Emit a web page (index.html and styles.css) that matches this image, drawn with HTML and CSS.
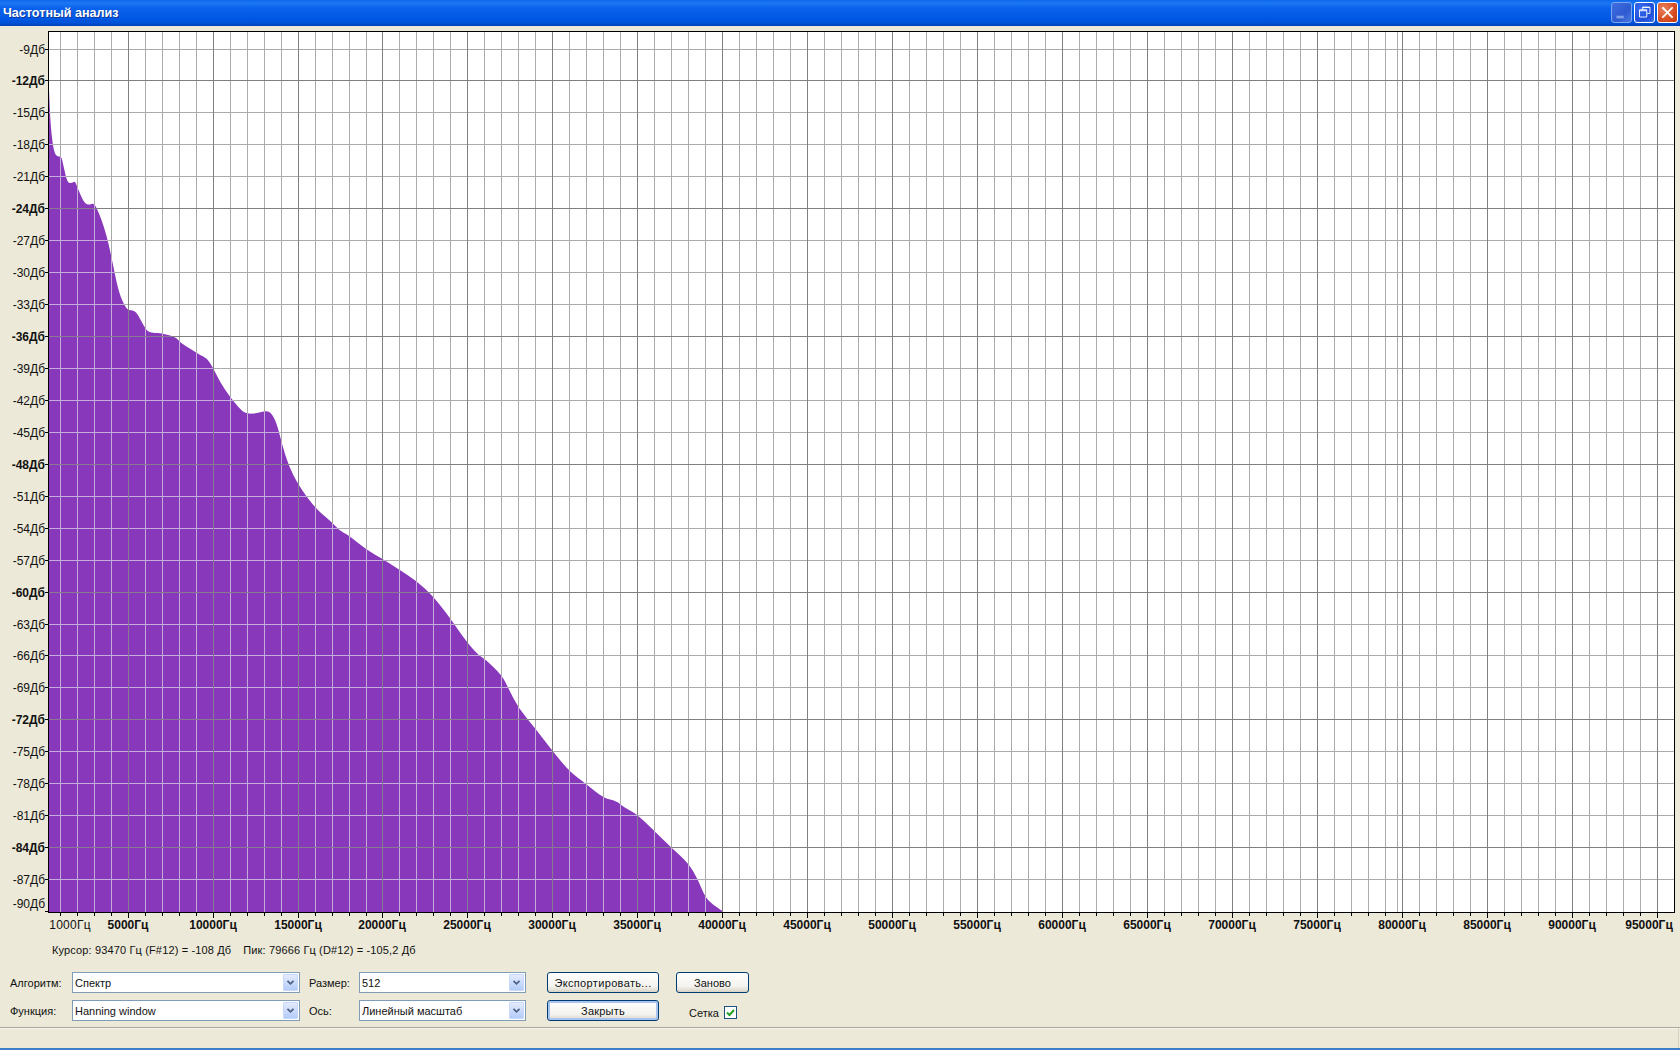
FILE: index.html
```html
<!DOCTYPE html>
<html lang="ru">
<head>
<meta charset="utf-8">
<title>Частотный анализ</title>
<link rel="stylesheet" href="styles.css">
</head>
<body>
<div class="window">
  <header class="titlebar">
    <div class="title">Частотный анализ</div>
    <div class="winbtns">
      <div class="winbtn min"><svg class="glyph" viewBox="0 0 21 21"><rect x="5" y="14" width="8" height="3" class="min-bar"/></svg></div>
      <div class="winbtn restore"><svg class="glyph" viewBox="0 0 21 21"><path class="white-line" d="M8.5 7.5V4.5H16.5V11.5H13.5M5 7.5H13V15.5H5Z"/><path class="white-line" d="M8 5h8M5 8.5h8"/></svg></div>
      <div class="winbtn close"><svg class="glyph" viewBox="0 0 21 21"><path class="white-x" d="M5.5 5.5L15.5 15.5M15.5 5.5L5.5 15.5"/></svg></div>
    </div>
  </header>

  <svg class="chart" viewBox="0 26 1680 909" width="1680" height="909">
    <defs>
      <path id="spectrum" d="M49 90 Q50 113 50.6 123 Q51.3 133 52.6 142.5 Q54 152 55.6 154.5 Q57.3 157 59.3 156.5 Q61.3 156 62.3 160.5 Q63.3 165 65.3 174 Q67.3 183 69.8 183 Q72.3 183 73.6 182 Q75 181 76.1 184 Q77.3 187 80.6 195 Q84 203 86.5 204 Q89 205 91.5 204 Q94 203 96.5 208 Q99 213 101.5 220 Q104 227 106.5 236 Q109 245 111.5 257.5 Q114 270 116.5 281.5 Q119 293 122.3 300.5 Q125.7 308 127.3 309 Q129 310 132.3 310.5 Q135.7 311 138.2 315.5 Q140.7 320 144 326 Q147.3 332 151.5 332.5 Q155.7 333 158.2 333 Q160.7 333 168.2 335 Q175.7 337 178.2 340 Q180.7 343 185.7 346 Q190.7 349 195.3 352 Q200 355 203.3 356.5 Q206.7 358 209.7 362.5 Q212.7 367 216.3 374.5 Q220 382 225 389.5 Q230 397 235.8 404 Q241.7 411 244.8 412.5 Q248 414 253 413.5 Q258 413 261.5 412 Q265 411 267.8 411.5 Q270.7 412 273.7 417.5 Q276.7 423 279.2 433 Q281.7 443 285 454 Q288.3 465 293.3 475 Q298.3 485 306.6 496.5 Q315 508 323.3 515 Q331.7 522 335.8 526.5 Q340 531 344.1 533 Q348.3 535 357.5 542.5 Q366.7 550 374.7 554.5 Q382.7 559 389.7 563.5 Q396.7 568 406.7 574.5 Q416.7 581 424.2 588 Q431.7 595 435.8 600 Q440 605 445 611.5 Q450 618 458.3 630 Q466.7 642 472.5 648.5 Q478.3 655 481.6 657 Q485 659 493.3 667 Q501.7 675 505 681.5 Q508.3 688 513.3 698 Q518.3 708 526.6 718 Q535 728 544.1 740 Q553.3 752 561.6 762 Q570 772 577.5 777.5 Q585 783 594.1 790.5 Q603.3 798 610 799.5 Q616.7 801 620 804 Q623.3 807 630 810.5 Q636.7 814 645 822 Q653.3 830 662.5 839 Q671.7 848 680 855.5 Q688.3 863 693.3 871.5 Q698.3 880 701.6 888.5 Q705 897 709.1 901 Q713.3 905 718 908 Q722.7 911 723 912 L49 912 Z"/>
      <clipPath id="fill-shape"><use href="#spectrum"/></clipPath>
      <path id="v-minor" d="M60.5 32V912M77.5 32V912M94.5 32V912M111.5 32V912M145.5 32V912M162.5 32V912M179.5 32V912M196.5 32V912M230.5 32V912M247.5 32V912M264.5 32V912M281.5 32V912M315.5 32V912M332.5 32V912M349.5 32V912M366.5 32V912M399.5 32V912M416.5 32V912M433.5 32V912M450.5 32V912M484.5 32V912M501.5 32V912M518.5 32V912M535.5 32V912M569.5 32V912M586.5 32V912M603.5 32V912M620.5 32V912M654.5 32V912M671.5 32V912M688.5 32V912M705.5 32V912M739.5 32V912M756.5 32V912M773.5 32V912M790.5 32V912M824.5 32V912M841.5 32V912M858.5 32V912M875.5 32V912M909.5 32V912M926.5 32V912M943.5 32V912M960.5 32V912M994.5 32V912M1011.5 32V912M1028.5 32V912M1045.5 32V912M1079.5 32V912M1096.5 32V912M1113.5 32V912M1130.5 32V912M1164.5 32V912M1181.5 32V912M1198.5 32V912M1215.5 32V912M1249.5 32V912M1266.5 32V912M1283.5 32V912M1300.5 32V912M1334.5 32V912M1351.5 32V912M1368.5 32V912M1385.5 32V912M1397.5 32V912M1419.5 32V912M1436.5 32V912M1453.5 32V912M1470.5 32V912M1504.5 32V912M1521.5 32V912M1538.5 32V912M1555.5 32V912M1589.5 32V912M1606.5 32V912M1623.5 32V912M1640.5 32V912"/>
      <path id="v-major" d="M128.5 32V912M213.5 32V912M298.5 32V912M382.5 32V912M467.5 32V912M552.5 32V912M637.5 32V912M722.5 32V912M807.5 32V912M892.5 32V912M977.5 32V912M1062.5 32V912M1147.5 32V912M1232.5 32V912M1317.5 32V912M1402.5 32V912M1487.5 32V912M1572.5 32V912M1657.5 32V912"/>
      <path id="h-minor" d="M49 49.5H1674M49 112.5H1674M49 144.5H1674M49 176.5H1674M49 240.5H1674M49 272.5H1674M49 304.5H1674M49 368.5H1674M49 400.5H1674M49 432.5H1674M49 496.5H1674M49 528.5H1674M49 560.5H1674M49 624.5H1674M49 655.5H1674M49 687.5H1674M49 751.5H1674M49 783.5H1674M49 815.5H1674M49 879.5H1674"/>
      <path id="h-major" d="M49 80.5H1674M49 208.5H1674M49 336.5H1674M49 464.5H1674M49 592.5H1674M49 719.5H1674M49 847.5H1674"/>
    </defs>

    <rect class="plot-bg" x="48" y="31" width="1626" height="881"/>
    <use href="#spectrum" class="spectrum"/>
    <use href="#v-minor" class="grid-minor"/>
    <use href="#h-minor" class="grid-minor"/>
    <use href="#v-major" class="grid-major"/>
    <use href="#h-major" class="grid-major"/>
    <g clip-path="url(#fill-shape)">
      <use href="#v-minor" class="grid-minor-in"/>
      <use href="#h-minor" class="grid-minor-in"/>
      <use href="#v-major" class="grid-major-in"/>
      <use href="#h-major" class="grid-major-in"/>
    </g>
    <rect class="plot-frame" x="48.5" y="31.5" width="1626" height="881"/>
    <path class="ticks" d="M45 49.5h3M45 80.5h3M45 112.5h3M45 144.5h3M45 176.5h3M45 208.5h3M45 240.5h3M45 272.5h3M45 304.5h3M45 336.5h3M45 368.5h3M45 400.5h3M45 432.5h3M45 464.5h3M45 496.5h3M45 528.5h3M45 560.5h3M45 592.5h3M45 624.5h3M45 655.5h3M45 687.5h3M45 719.5h3M45 751.5h3M45 783.5h3M45 815.5h3M45 847.5h3M45 879.5h3M45 911.5h3"/>
    <path class="ticks" d="M60.5 913v3M77.5 913v3M94.5 913v3M111.5 913v3M145.5 913v3M162.5 913v3M179.5 913v3M196.5 913v3M230.5 913v3M247.5 913v3M264.5 913v3M281.5 913v3M315.5 913v3M332.5 913v3M349.5 913v3M366.5 913v3M399.5 913v3M416.5 913v3M433.5 913v3M450.5 913v3M484.5 913v3M501.5 913v3M518.5 913v3M535.5 913v3M569.5 913v3M586.5 913v3M603.5 913v3M620.5 913v3M654.5 913v3M671.5 913v3M688.5 913v3M705.5 913v3M739.5 913v3M756.5 913v3M773.5 913v3M790.5 913v3M824.5 913v3M841.5 913v3M858.5 913v3M875.5 913v3M909.5 913v3M926.5 913v3M943.5 913v3M960.5 913v3M994.5 913v3M1011.5 913v3M1028.5 913v3M1045.5 913v3M1079.5 913v3M1096.5 913v3M1113.5 913v3M1130.5 913v3M1164.5 913v3M1181.5 913v3M1198.5 913v3M1215.5 913v3M1249.5 913v3M1266.5 913v3M1283.5 913v3M1300.5 913v3M1334.5 913v3M1351.5 913v3M1368.5 913v3M1385.5 913v3M1419.5 913v3M1436.5 913v3M1453.5 913v3M1470.5 913v3M1504.5 913v3M1521.5 913v3M1538.5 913v3M1555.5 913v3M1589.5 913v3M1606.5 913v3M1623.5 913v3M1640.5 913v3"/>
    <path class="ticks" d="M128.5 913v5M213.5 913v5M298.5 913v5M382.5 913v5M467.5 913v5M552.5 913v5M637.5 913v5M722.5 913v5M807.5 913v5M892.5 913v5M977.5 913v5M1062.5 913v5M1147.5 913v5M1232.5 913v5M1317.5 913v5M1402.5 913v5M1487.5 913v5M1572.5 913v5M1657.5 913v5"/>

    <g class="ylabels">
      <text x="45" y="54">-9Дб</text>
      <text x="45" y="85" class="b">-12Дб</text>
      <text x="45" y="117">-15Дб</text>
      <text x="45" y="149">-18Дб</text>
      <text x="45" y="181">-21Дб</text>
      <text x="45" y="213" class="b">-24Дб</text>
      <text x="45" y="245">-27Дб</text>
      <text x="45" y="277">-30Дб</text>
      <text x="45" y="309">-33Дб</text>
      <text x="45" y="341" class="b">-36Дб</text>
      <text x="45" y="373">-39Дб</text>
      <text x="45" y="405">-42Дб</text>
      <text x="45" y="437">-45Дб</text>
      <text x="45" y="469" class="b">-48Дб</text>
      <text x="45" y="501">-51Дб</text>
      <text x="45" y="533">-54Дб</text>
      <text x="45" y="565">-57Дб</text>
      <text x="45" y="597" class="b">-60Дб</text>
      <text x="45" y="629">-63Дб</text>
      <text x="45" y="660">-66Дб</text>
      <text x="45" y="692">-69Дб</text>
      <text x="45" y="724" class="b">-72Дб</text>
      <text x="45" y="756">-75Дб</text>
      <text x="45" y="788">-78Дб</text>
      <text x="45" y="820">-81Дб</text>
      <text x="45" y="852" class="b">-84Дб</text>
      <text x="45" y="884">-87Дб</text>
      <text x="45" y="908">-90Дб</text>
    </g>
    <g class="xlabels">
      <text x="70" y="929" class="r">1000Гц</text>
      <text x="128" y="929" class="b">5000Гц</text>
      <text x="213" y="929" class="b">10000Гц</text>
      <text x="298" y="929" class="b">15000Гц</text>
      <text x="382" y="929" class="b">20000Гц</text>
      <text x="467" y="929" class="b">25000Гц</text>
      <text x="552" y="929" class="b">30000Гц</text>
      <text x="637" y="929" class="b">35000Гц</text>
      <text x="722" y="929" class="b">40000Гц</text>
      <text x="807" y="929" class="b">45000Гц</text>
      <text x="892" y="929" class="b">50000Гц</text>
      <text x="977" y="929" class="b">55000Гц</text>
      <text x="1062" y="929" class="b">60000Гц</text>
      <text x="1147" y="929" class="b">65000Гц</text>
      <text x="1232" y="929" class="b">70000Гц</text>
      <text x="1317" y="929" class="b">75000Гц</text>
      <text x="1402" y="929" class="b">80000Гц</text>
      <text x="1487" y="929" class="b">85000Гц</text>
      <text x="1572" y="929" class="b">90000Гц</text>
      <text x="1649" y="929" class="b">95000Гц</text>
    </g>
  </svg>

  <div class="readout">
    <span>Курсор: 93470 Гц (F#12) = -108 Дб</span>
    <span>Пик: 79666 Гц (D#12) = -105,2 Дб</span>
  </div>

  <div class="controls">
    <label class="lbl">Алгоритм:</label>
    <div class="combo"><span>Спектр</span><i class="combo-arrow"><svg viewBox="0 0 15 17"><path d="M4 6.5L7.5 10L11 6.5" class="chev"/></svg></i></div>
    <label class="lbl lbl-2">Размер:</label>
    <div class="combo"><span>512</span><i class="combo-arrow"><svg viewBox="0 0 15 17"><path d="M4 6.5L7.5 10L11 6.5" class="chev"/></svg></i></div>
    <button class="btn btn-export btn-spaced">Экспортировать...</button>
    <button class="btn btn-again">Заново</button>

    <label class="lbl">Функция:</label>
    <div class="combo"><span>Hanning window</span><i class="combo-arrow"><svg viewBox="0 0 15 17"><path d="M4 6.5L7.5 10L11 6.5" class="chev"/></svg></i></div>
    <label class="lbl lbl-2">Ось:</label>
    <div class="combo"><span>Линейный масштаб</span><i class="combo-arrow"><svg viewBox="0 0 15 17"><path d="M4 6.5L7.5 10L11 6.5" class="chev"/></svg></i></div>
    <button class="btn btn-default btn-export">Закрыть</button>
    <div class="gridtoggle">
      <span>Сетка</span>
      <span class="check"><svg viewBox="0 0 11 11"><path d="M2 5.5L4.5 8L9 3" class="tick"/></svg></span>
    </div>
  </div>

  <div class="statusbar"><div class="status-cell"></div></div>
  <div class="taskstrip"></div>
</div>
</body>
</html>
```
FILE: styles.css
```css
* { box-sizing: border-box; }
html, body { margin: 0; padding: 0; height: 100%; overflow: hidden; }
body { background: #ece9d8; font-family: "Liberation Sans", Arial, sans-serif; font-size: 11px; color: #111; }

.window { display: flex; flex-direction: column; width: 1680px; height: 1050px; }

.titlebar {
  flex: 0 0 26px; display: flex; align-items: center; justify-content: space-between;
  padding: 0 2px 0 3px;
  background: linear-gradient(to bottom, #0f66ea 0, #1b78f4 12%, #0b62ea 32%, #0058e4 70%, #0052d8 88%, #0040b4 100%);
}
.title { color: #fff; font-weight: bold; font-size: 12.6px; text-shadow: 1px 1px 0 #0f3a9a; }
.winbtns { display: flex; gap: 2px; margin-bottom: 1px; }
.winbtn { width: 21px; height: 21px; border-radius: 3px; border: 1px solid #fff; }
.glyph { display: block; width: 19px; height: 19px; }
.winbtn.min { border-color: #7aa4f0; background: linear-gradient(135deg, #3f6fe0, #2f5ad0 60%, #4a78e0); }
.min-bar { fill: #7f9fe8; }
.winbtn.restore { background: radial-gradient(circle at 30% 30%, #3a6cf0, #1f4fd8 60%, #3f70e8); }
.winbtn.close { background: radial-gradient(circle at 30% 30%, #e8805c, #d84e22 60%, #c03a10); }
.white-line { fill: none; stroke: #fff; stroke-width: 1; }
.white-x { fill: none; stroke: #fff; stroke-width: 2; stroke-linecap: square; }

.chart { display: block; flex: 0 0 909px; }
.plot-bg { fill: #fff; }
.plot-frame { fill: none; stroke: #000; stroke-width: 1; shape-rendering: crispEdges; }
.spectrum { fill: #8838bb; }
.grid-minor, .grid-major, .grid-minor-in, .grid-major-in, .ticks { fill: none; stroke-width: 1; shape-rendering: crispEdges; }
.grid-minor { stroke: #ababab; }
.grid-major { stroke: #808080; }
.grid-minor-in { stroke: #c5abd9; }
.grid-major-in { stroke: #867a90; }
.ticks { stroke: #000; }

.ylabels text, .xlabels text { font-family: "Liberation Sans", Arial, sans-serif; font-size: 12px; fill: #111; }
.ylabels text { text-anchor: end; }
.xlabels text { text-anchor: middle; }
.ylabels .b, .xlabels .b { font-weight: bold; }
.xlabels .r { letter-spacing: 0.25px; }

.readout { flex: 0 0 37px; display: flex; gap: 12px; padding: 9px 0 0 52px; line-height: 13px; letter-spacing: 0.14px; }

.controls {
  display: grid;
  grid-template-columns: 63px 228px 59px 167px 133px 90px;
  grid-template-rows: 21px 21px;
  row-gap: 7px;
  padding-left: 9px;
  height: 56px;
  border-bottom: 1px solid #aca899;
  box-shadow: 0 1px 0 #f6f4ea;
}
.lbl { display: flex; align-items: center; padding-left: 1px; }
.lbl-2 { padding-left: 9px; }
.combo {
  display: flex; align-items: center; justify-content: space-between;
  border: 1px solid #7f9db9; background: #fff; padding: 1px 1px 1px 2px;
}
.combo span { padding-left: 0; }
.combo-arrow {
  display: block; width: 15px; height: 17px; border-radius: 1px;
  background: linear-gradient(to bottom, #e3ebfe, #b4ccf8);
  border: 1px solid #c8d8fa;
}
.combo-arrow svg { display: block; width: 13px; height: 15px; }
.chev { fill: none; stroke: #4d6185; stroke-width: 2; }

.btn {
  font: inherit; color: #111; padding: 0; cursor: default;
  border: 1px solid #003c74; border-radius: 3px;
  background: linear-gradient(to bottom, #fff, #f4f3ee 70%, #d8d3c6);
}
.btn-export { margin-left: 21px; width: 112px; }
.btn-spaced { letter-spacing: 0.35px; }
.btn-again { margin-left: 17px; width: 73px; }
.btn-default { box-shadow: inset 0 0 0 2px #a9c4ee; letter-spacing: 0.2px; }

.gridtoggle { display: flex; align-items: center; gap: 5px; margin-left: 30px; padding-top: 4px; white-space: nowrap; }
.check { display: block; width: 13px; height: 13px; border: 1px solid #1c5180; background: #fff; }
.check svg { display: block; width: 11px; height: 11px; }
.tick { fill: none; stroke: #21a121; stroke-width: 2; }

.statusbar { flex: 1 1 auto; display: flex; justify-content: flex-end; }
.status-cell { width: 2px; border-left: 1px solid #d8d4c4; }
.taskstrip { flex: 0 0 2px; background: #3a7fc8; }
```
